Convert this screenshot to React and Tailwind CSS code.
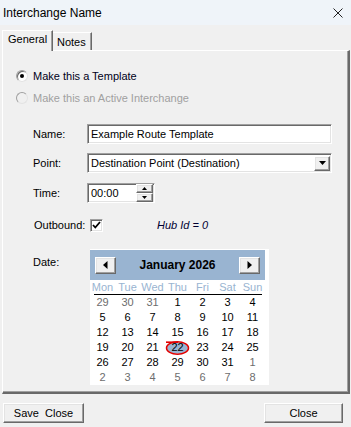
import React from "react";

const sunken =
  "border border-t-[#a0a0a0] border-l-[#a0a0a0] border-r-white border-b-white shadow-[inset_1px_1px_0_#696969,inset_-1px_-1px_0_#e3e3e3]";
const raised =
  "border border-t-white border-l-white border-r-[#696969] border-b-[#696969] shadow-[inset_-1px_-1px_0_#a0a0a0,inset_1px_1px_0_#e3e3e3] bg-[#f0f0f0]";

function Radio({ checked, disabled, label }) {
  return (
    <div className="flex items-center h-[14px]">
      <div
        className={`w-[12px] h-[12px] rounded-full border border-t-[#a0a0a0] border-l-[#a0a0a0] border-r-[#e3e3e3] border-b-[#e3e3e3] flex items-center justify-center ${
          disabled ? "bg-[#f0f0f0]" : "bg-white shadow-[inset_1px_1px_0_#696969]"
        }`}
      >
        {checked && <div className="w-[4px] h-[4px] rounded-full bg-black" />}
      </div>
      <span className={`ml-[5px] leading-[14px] ${disabled ? "text-[#a0a0a0]" : "text-[#000020]"}`}>
        {label}
      </span>
    </div>
  );
}

const rows = [
  [[29, 1], [30, 1], [31, 1], [1], [2], [3], [4]],
  [[5], [6], [7], [8], [9], [10], [11]],
  [[12], [13], [14], [15], [16], [17], [18]],
  [[19], [20], [21], [22], [23], [24], [25]],
  [[26], [27], [28], [29], [30], [31], [1, 1]],
  [[2, 1], [3, 1], [4, 1], [5, 1], [6, 1], [7, 1], [8, 1]],
];

function Calendar() {
  return (
    <div className="w-[179px] h-[136px] bg-white pt-[1px]">
      <div className="w-[175px] h-[30px] bg-[#99b4d1] flex items-center justify-between px-[5px]">
        <div className={`w-[21px] h-[17px] ${raised} flex items-center justify-center`}>
          <svg width="5" height="8" viewBox="0 0 5 8">
            <path d="M4.5 0 L0 4 L4.5 8 Z" fill="#000" />
          </svg>
        </div>
        <span className="text-[12px] font-bold text-black">January 2026</span>
        <div className={`w-[21px] h-[17px] ${raised} flex items-center justify-center`}>
          <svg width="5" height="8" viewBox="0 0 5 8">
            <path d="M0.5 0 L5 4 L0.5 8 Z" fill="#000" />
          </svg>
        </div>
      </div>
      <div className="w-[175px] h-[14px] flex text-[#99b4d1] leading-[14px]">
        {["Mon", "Tue", "Wed", "Thu", "Fri", "Sat", "Sun"].map((d) => (
          <div key={d} className="w-[25px] text-center">
            {d}
          </div>
        ))}
      </div>
      <div className="ml-[4px] w-[168px] h-[1px] bg-black" />
      {rows.map((r, i) => (
        <div key={i} className="w-[175px] h-[15px] flex leading-[15px]">
          {r.map(([n, t], j) => (
            <div
              key={j}
              className={`relative w-[25px] h-[15px] text-center ${t ? "text-[#6d6d6d]" : "text-black"}`}
            >
              {i === 3 && j === 3 && (
                <svg className="absolute left-0 top-0" width="25" height="15" viewBox="0 0 25 15">
                  <ellipse cx="12.5" cy="8" rx="10.5" ry="5.8" fill="#99b4d1" />
                  <ellipse cx="12.5" cy="8" rx="11" ry="6.2" fill="none" stroke="#e00000" strokeWidth="1.5" />
                  <path d="M1 2.2 L13 2.2" stroke="#e00000" strokeWidth="1.6" />
                </svg>
              )}
              <span className="relative">{n}</span>
            </div>
          ))}
        </div>
      ))}
    </div>
  );
}

export default function App() {
  return (
    <div className="w-[351px] h-[427px] bg-[#f0f0f0] font-['Liberation_Sans',Arial,sans-serif] text-[11px] text-black overflow-hidden">
      {/* title bar */}
      <div className="h-[25px] bg-[#eff4f9] flex items-center justify-between pl-[3px] pr-[8px]">
        <span className="text-[12px] text-black leading-[16px]">Interchange Name</span>
        <svg width="10" height="10" viewBox="0 0 10 10">
          <path d="M0.5 0.5 L9.5 9.5 M9.5 0.5 L0.5 9.5" stroke="#222" strokeWidth="1" />
        </svg>
      </div>
      {/* tabs */}
      <div className="h-[25px] flex items-end pl-[2px] relative z-10">
        <div className="h-[21px] w-[51px] bg-[#f0f0f0] border-t border-l border-white border-r border-r-[#696969] shadow-[inset_-1px_0_0_#a0a0a0] pl-[5px] pt-[1px] leading-[14px] -mb-[1px]">
          General
        </div>
        <div className="h-[18px] w-[39px] bg-[#f0f0f0] border-t border-white border-r border-r-[#696969] shadow-[inset_-1px_0_0_#a0a0a0] pl-[4px] pt-[2px] leading-[14px]">
          Notes
        </div>
      </div>
      {/* panel */}
      <div className="ml-[2px] w-[348px] h-[344px] border-t border-l border-white border-r-2 border-b-2 border-r-[#696969] border-b-[#696969] shadow-[inset_-1px_-1px_0_#a0a0a0]">
        <div className="pl-[13px] pt-[18px] flex flex-col gap-[8px]">
          <Radio checked label="Make this a Template" />
          <Radio disabled label="Make this an Active Interchange" />
        </div>
        <div className="pl-[30px] flex flex-col">
          <div className="mt-[19px] h-[20px] flex items-center">
            <span className="w-[54px]">Name:</span>
            <div className={`w-[245px] h-[20px] bg-white ${sunken} pl-[3px] leading-[18px]`}>
              Example Route Template
            </div>
          </div>
          <div className="mt-[9px] h-[20px] flex items-center">
            <span className="w-[54px]">Point:</span>
            <div className={`w-[245px] h-[20px] bg-white ${sunken} pl-[3px] pr-[1px] flex items-center justify-between`}>
              <span className="leading-[18px]">Destination Point (Destination)</span>
              <div className={`w-[16px] h-[15px] ${raised} flex items-center justify-center`}>
                <svg width="7" height="4" viewBox="0 0 7 4">
                  <path d="M0 0 L7 0 L3.5 4 Z" fill="#000" />
                </svg>
              </div>
            </div>
          </div>
          <div className="mt-[10px] h-[20px] flex items-center">
            <span className="w-[54px]">Time:</span>
            <div className={`w-[68px] h-[20px] bg-white ${sunken} pl-[3px] pr-[1px] flex items-center justify-between`}>
              <span className="leading-[18px]">00:00</span>
              <div className="flex flex-col">
                <div className={`w-[17px] h-[9px] ${raised} flex items-center justify-center`}>
                  <svg width="5" height="3" viewBox="0 0 5 3">
                    <path d="M0 3 L5 3 L2.5 0 Z" fill="#000" />
                  </svg>
                </div>
                <div className={`w-[17px] h-[9px] ${raised} flex items-center justify-center`}>
                  <svg width="5" height="3" viewBox="0 0 5 3">
                    <path d="M0 0 L5 0 L2.5 3 Z" fill="#000" />
                  </svg>
                </div>
              </div>
            </div>
          </div>
          <div className="mt-[15px] h-[14px] flex items-center">
            <span className="w-[57px] pl-[1px]">Outbound:</span>
            <div className={`w-[13px] h-[13px] bg-white ${sunken} flex items-center justify-center`}>
              <svg width="9" height="8" viewBox="0 0 9 8">
                <path d="M1 4 L3.3 6.5 L8 1" fill="none" stroke="#000" strokeWidth="1.8" />
              </svg>
            </div>
            <span className="ml-[54px] italic text-[#000030]">Hub Id = 0</span>
          </div>
          <div className="mt-[17px] flex items-start">
            <span className="w-[57px] pt-[7px] leading-[13px]">Date:</span>
            <Calendar />
          </div>
        </div>
      </div>
      {/* footer */}
      <div className="mt-[9px] flex justify-between pl-[3px] pr-[8px]">
        <div className={`w-[81px] h-[20px] ${raised} flex items-center justify-center leading-[14px]`}>
          Save&nbsp; Close
        </div>
        <div className={`w-[79px] h-[20px] ${raised} flex items-center justify-center leading-[14px]`}>
          Close
        </div>
      </div>
    </div>
  );
}
